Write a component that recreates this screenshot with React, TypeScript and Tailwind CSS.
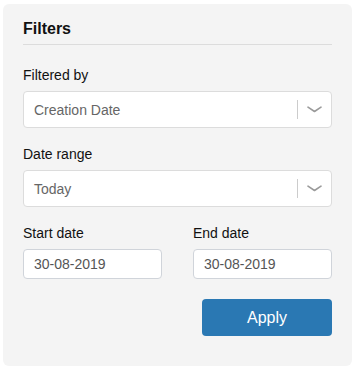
import React from "react";

function Chevron() {
  return (
    <svg width="15" height="7" viewBox="0 0 15 7" fill="none">
      <path d="M1 1.2L7.5 5.5L14 1.2" stroke="#9a9a9a" strokeWidth="1.6" strokeLinecap="round" strokeLinejoin="round" />
    </svg>
  );
}

function Select({ value }: { value: string }) {
  return (
    <div className="flex h-[37px] items-center rounded-[4px] border border-[#dcdcdc] bg-white">
      <span className="flex-1 pl-[10px] pt-[1px] text-[14px] text-[#666666]">{value}</span>
      <div className="h-[19px] w-px bg-[#cccccc]" />
      <div className="flex w-[33px] items-center justify-center">
        <Chevron />
      </div>
    </div>
  );
}

export default function App() {
  return (
    <div className="bg-white pl-[3px] pt-[4px]" style={{ fontFamily: '"Liberation Sans", Arial, sans-serif' }}>
      <div className="flex w-[349px] flex-col rounded-[6px] bg-[#f4f4f4] px-[20px] pb-[30px] pt-[15px] text-[#111111]">
        <div className="border-b border-[#dcdcdc] pb-[5px] text-[16px] font-bold leading-[20px]">Filters</div>
        <div className="mt-[20px] text-[14px] leading-[20px]">Filtered by</div>
        <div className="mt-[6px]">
          <Select value="Creation Date" />
        </div>
        <div className="mt-[16px] text-[14px] leading-[20px]">Date range</div>
        <div className="mt-[6px]">
          <Select value="Today" />
        </div>
        <div className="mt-[16px] grid grid-cols-2 gap-[31px]">
          <div className="flex flex-col">
            <div className="text-[14px] leading-[20px]">Start date</div>
            <div className="mt-[6px] flex h-[30px] w-[139px] items-center rounded-[4px] border border-[#d0d4da] bg-white pl-[10px] pt-[1px] text-[14px] text-[#555555]">
              30-08-2019
            </div>
          </div>
          <div className="flex flex-col">
            <div className="text-[14px] leading-[20px]">End date</div>
            <div className="mt-[6px] flex h-[30px] w-[139px] items-center rounded-[4px] border border-[#d0d4da] bg-white pl-[10px] pt-[1px] text-[14px] text-[#555555]">
              30-08-2019
            </div>
          </div>
        </div>
        <div className="mt-[20px] flex justify-end">
          <button className="flex h-[37px] w-[130px] items-center justify-center rounded-[4px] bg-[#2a78b3] text-[16px] text-white">
            Apply
          </button>
        </div>
      </div>
    </div>
  );
}
